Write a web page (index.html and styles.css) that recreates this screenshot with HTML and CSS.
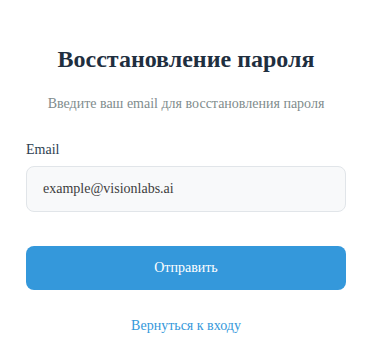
FILE: index.html
```html
<!DOCTYPE html>
<html lang="ru">
  <head>
    <meta charset="UTF-8" />
    <meta name="viewport" content="width=device-width, initial-scale=1.0" />
    <title>Восстановление пароля</title>
    <link rel="stylesheet" href="styles.css">
  </head>
  <body>
    <div class="reset">
      <h2 class="reset-title">Восстановление пароля</h2>
      <p class="reset-text">Введите ваш email для восстановления пароля</p>
      <form class="reset-form">
        <label class="field-label" for="email">Email</label>
        <input class="field-input" id="email" type="email" placeholder="example@visionlabs.ai">
        <button class="submit-btn" type="button">Отправить</button>
      </form>
      <a class="back-link" href="#">Вернуться к входу</a>
    </div>
  </body>
</html>
```

FILE: styles.css
```css
html,
body {
  margin: 0;
  padding: 0;
  background: #fff;
  font-family: "Times New Roman", "Liberation Serif", serif;
}

.reset {
  box-sizing: border-box;
  width: 100%;
  padding: 43px 28px 0 26px;
  text-align: center;
}

.reset-title {
  margin: 0;
  font-size: 24px;
  font-weight: bold;
  color: #1f2f40;
  line-height: 32px;
}

.reset-text {
  margin: 19px 0 0;
  font-size: 14px;
  color: #7f8c8d;
  line-height: 20px;
}

.reset-form {
  margin-top: 27px;
  text-align: left;
}

.field-label {
  display: block;
  font-size: 14px;
  line-height: 17px;
  color: #2c3e50;
  margin-bottom: 8px;
}

.field-input {
  box-sizing: border-box;
  display: block;
  width: 100%;
  height: 46px;
  padding: 0 16px;
  border: 1px solid #e1e5e9;
  border-radius: 8px;
  background: #f8f9fa;
  font-family: inherit;
  font-size: 14px;
  color: #2c3e50;
}

.field-input::placeholder {
  color: #3d3d3d;
}

.submit-btn {
  display: block;
  width: 100%;
  height: 44px;
  margin-top: 34px;
  border: none;
  border-radius: 8px;
  background: #3498db;
  color: #fff;
  font-family: inherit;
  font-size: 14px;
}

.back-link {
  display: inline-block;
  margin-top: 27px;
  font-size: 14px;
  line-height: 17px;
  color: #3498db;
  text-decoration: none;
}
```
